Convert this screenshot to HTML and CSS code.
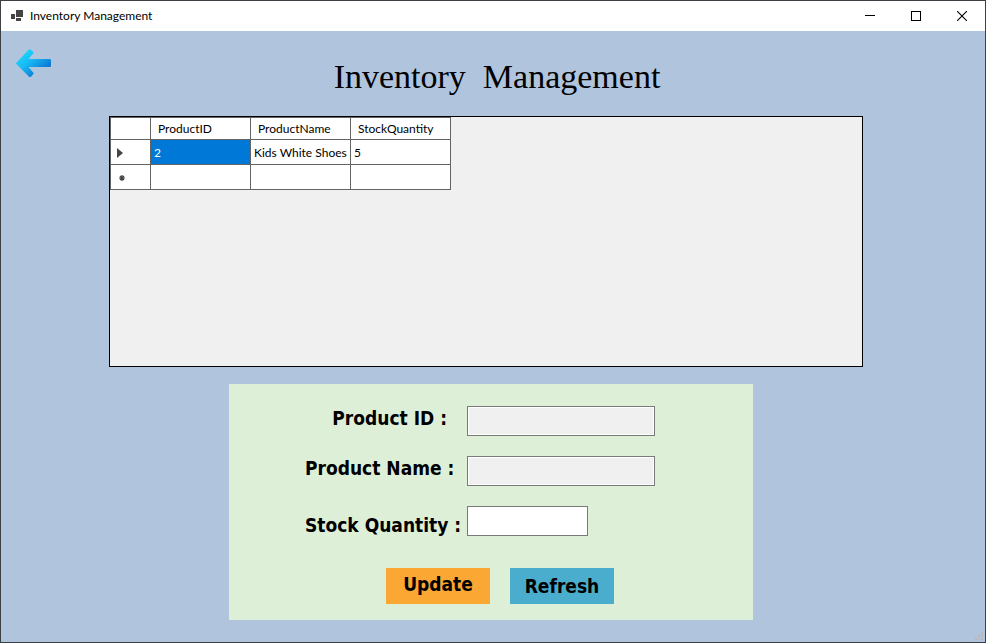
FILE: index.html
```html
<!DOCTYPE html>
<html lang="en">
<head>
<meta charset="utf-8">
<title>Inventory Management</title>
<link rel="stylesheet" href="styles.css">
</head>
<body>
<div class="window">
  <header class="titlebar">
    <svg class="app-icon" width="13" height="12" viewBox="0 0 13 12" shape-rendering="crispEdges" aria-hidden="true">
      <path fill="#444" d="M5 0h7v7H5zM0 4h4v5H0zM5 8h5v3H5z"/>
    </svg>
    <span class="caption">Inventory Management</span>
    <div class="window-controls">
      <button type="button" class="control" aria-label="Minimize">
        <svg width="10" height="10" viewBox="0 0 10 10" shape-rendering="crispEdges"><path d="M0 4.5h10" stroke="#000"/></svg>
      </button>
      <button type="button" class="control" aria-label="Maximize">
        <svg width="10" height="10" viewBox="0 0 10 10" shape-rendering="crispEdges"><path d="M.5.5h9v9h-9z" fill="none" stroke="#000"/></svg>
      </button>
      <button type="button" class="control" aria-label="Close">
        <svg width="10" height="10" viewBox="0 0 10 10"><path d="M0 0l10 10M10 0L0 10" stroke="#000" stroke-width="1.1"/></svg>
      </button>
    </div>
  </header>
  <main class="client">
    <div class="heading">
      <button type="button" class="back" aria-label="Back">
        <svg width="35" height="30" viewBox="0 0 35 30">
          <defs>
            <linearGradient id="arrow-fill" x1="0" y1="0" x2="1" y2="1">
              <stop offset="0" stop-color="#21e4fb"/>
              <stop offset=".4" stop-color="#18bcf6"/>
              <stop offset="1" stop-color="#0650c0"/>
            </linearGradient>
          </defs>
          <path fill="url(#arrow-fill)" d="M.4 13.8 12.6.8Q13.8-.4 15 .8L16.8 2.4Q18 3.6 17 4.8L12.5 10H33.8Q35 10 35 11.2V16.8Q35 18 33.8 18H12.5L17 23.2Q18 24.4 17 25.6L15.2 27.4Q14 28.4 12.8 27.4L.4 15Q-.2 14.4.4 13.8Z"/>
        </svg>
      </button>
      <h1 class="title">Inventory&nbsp; Management</h1>
    </div>
    <section class="grid-view">
      <table class="stock">
        <thead>
          <tr><th class="marker"></th><th>ProductID</th><th>ProductName</th><th>StockQuantity</th></tr>
        </thead>
        <tbody>
          <tr>
            <td class="marker"><svg width="6" height="10" viewBox="0 0 6 10"><path fill="#444" d="M0 0l6 5-6 5z"/></svg></td>
            <td class="selected">2</td><td>Kids White Shoes</td><td>5</td>
          </tr>
          <tr>
            <td class="marker new-row"><svg width="6" height="6" viewBox="0 0 6 6"><path d="M3 0v6M0 3h6M1 1l4 4M5 1L1 5" stroke="#444" stroke-width="1.2"/></svg></td>
            <td></td><td></td><td></td>
          </tr>
        </tbody>
      </table>
    </section>
    <form class="panel">
      <div class="field">
        <label class="label label-id" for="product-id">Product ID :</label>
        <input class="box" id="product-id" type="text" readonly>
      </div>
      <div class="field">
        <label class="label label-name" for="product-name">Product Name :</label>
        <input class="box" id="product-name" type="text" readonly>
      </div>
      <div class="field">
        <label class="label label-stock" for="stock">Stock Quantity :</label>
        <input class="box box-short" id="stock" type="text">
      </div>
      <div class="actions">
        <button type="button" class="action update">Update</button>
        <button type="button" class="action refresh">Refresh</button>
      </div>
    </form>
    <svg class="grip" width="8" height="8" viewBox="0 0 8 8" shape-rendering="crispEdges" aria-hidden="true"><path fill="#b8b8b8" d="M6 0h2v2H6zM3 3h2v2H3zM6 3h2v2H6zM0 6h2v2H0zM3 6h2v2H3zM6 6h2v2H6z"/></svg>
  </main>
</div>
</body>
</html>
```
FILE: styles.css
```css
* {
  box-sizing: border-box;
}

body {
  margin: 0;
  color: #000;
  font: 12px/16px Lato, "Open Sans", sans-serif;
}

button {
  padding: 0;
  border: 0;
  background: none;
  color: inherit;
}

svg {
  display: block;
}

.window {
  display: flex;
  flex-direction: column;
  min-height: 100vh;
  border: 1px solid #3c3f44;
}

.titlebar {
  display: flex;
  align-items: center;
  height: 30px;
  padding-left: 10px;
  background: #fff;
}

.caption {
  margin-left: 6px;
}

.window-controls {
  display: flex;
  margin-left: auto;
}

.control {
  display: grid;
  place-items: center;
  width: 46px;
  height: 30px;
}

.client {
  position: relative;
  flex: 1;
  padding-bottom: 20px;
  background: #b0c4de;
}

.heading {
  display: flex;
  align-items: flex-start;
  height: 85px;
  padding: 18px 42px 0 15px;
}

.back {
  width: 35px;
}

.title {
  flex: 1;
  margin: 8px 0 0;
  font: 34px/40px "Liberation Serif", serif;
  text-align: center;
}

.grid-view {
  height: 251px;
  margin: 0 122px 0 108px;
  border: 1px solid #000;
  background: #f0f0f0;
}

.stock {
  width: 341px;
  table-layout: fixed;
  border-spacing: 0;
  border-top: 1px solid #646464;
  border-left: 1px solid #646464;
  background: #fff;
}

.stock th,
.stock td {
  height: 25px;
  padding: 2px 3px 0;
  border: solid #646464;
  border-width: 0 1px 1px 0;
  font-weight: 400;
  text-align: left;
  white-space: nowrap;
}

.stock th {
  height: 22px;
  padding: 0 7px;
}

.stock .marker {
  width: 40px;
  padding: 2px 0 0 6px;
}

.stock .new-row {
  padding-left: 8px;
}

.stock .selected {
  background: #0078d7;
  color: #fff;
}

.panel {
  margin: 17px 232px 0 228px;
  padding: 22px 0 16px 76px;
  background: #deefd8;
}

.field {
  display: flex;
  margin-bottom: 20px;
}

.label {
  width: 162px;
  font: bold 19px/24px "DejaVu Sans Condensed", "DejaVu Sans", sans-serif;
  text-align: right;
  white-space: nowrap;
}

.label-id {
  padding-right: 20px;
}

.label-name {
  padding-right: 14px;
}

.label-stock {
  padding: 7px 7px 0 0;
}

.box {
  width: 188px;
  height: 30px;
  padding: 0 4px;
  border: 1px solid #7a7a7a;
  background: #fff;
  font: inherit;
}

.box:read-only {
  background: #f0f0f0;
  box-shadow: inset 0 0 0 1px #fff;
}

.box-short {
  width: 121px;
}

.actions {
  display: flex;
  gap: 20px;
  margin-top: 31px;
  padding-left: 81px;
}

.action {
  width: 104px;
  height: 36px;
  font: bold 19px/24px "DejaVu Sans Condensed", "DejaVu Sans", sans-serif;
}

.update {
  padding-bottom: 4px;
  background: #fba733;
}

.refresh {
  background: #4aadce;
}

.grip {
  position: absolute;
  right: 2px;
  bottom: 2px;
}
```
